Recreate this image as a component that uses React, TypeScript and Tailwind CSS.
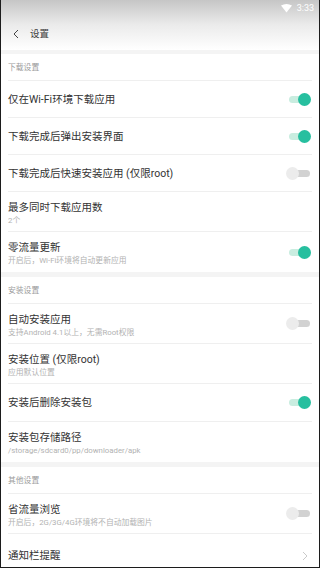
import React from "react";

type Row = {
  title: string;
  sub?: string;
  toggle?: "on" | "off";
  chevron?: boolean;
  last?: boolean;
};

function Toggle({ on }: { on: boolean }) {
  return (
    <div className="relative w-[26px] h-[13px] shrink-0">
      <div
        className={
          on
            ? "absolute left-[3px] top-[3px] w-[19px] h-[7px] rounded-full bg-[#c9ede0]"
            : "absolute left-[5px] top-[3px] w-[19px] h-[7px] rounded-full bg-[#d2d2d2]"
        }
      />
      {on ? (
        <div className="absolute left-[12px] top-0 w-[13px] h-[13px] rounded-full bg-[#27bf9f]" />
      ) : (
        <div className="absolute left-0 top-0 w-[13px] h-[13px] rounded-full bg-[#ececec]" />
      )}
    </div>
  );
}

function SettingRow({ row, h }: { row: Row; h: string }) {
  return (
    <div
      className={
        "mx-[7px] shrink-0 flex items-center justify-between " +
        h +
        (row.last ? "" : " border-b border-[#efefef]")
      }
    >
      <div className={"flex flex-col gap-[2px] " + (row.sub ? "pt-[4px]" : "pt-[1px]")}>
        <div className="text-[10.5px] leading-[12px] text-[#333333]">{row.title}</div>
        {row.sub && (
          <div className="text-[7.8px] leading-[10px] text-[#b2b2b2]">{row.sub}</div>
        )}
      </div>
      {row.toggle && <Toggle on={row.toggle === "on"} />}
      {row.chevron && (
        <svg width="8" height="10" viewBox="0 0 8 10" className="mr-[3px]">
          <path d="M2 1 L6 5 L2 9" fill="none" stroke="#c4c4c4" strokeWidth="0.9" />
        </svg>
      )}
    </div>
  );
}

function SectionLabel({ text, h }: { text: string; h: string }) {
  return (
    <div className={"mx-[7px] shrink-0 flex items-center pt-[2px] border-b border-[#efefef] " + h}>
      <span className="text-[7.8px] leading-[10px] text-[#9a9a9a]">{text}</span>
    </div>
  );
}

function Band({ h }: { h: string }) {
  return <div className={"shrink-0 bg-[#f4f4f4] " + h} />;
}

export default function App() {
  return (
    <div className="w-[320px] h-[568px] overflow-hidden bg-white border-l border-r border-b border-[#1c1c1c] font-['Roboto','Noto_Sans_CJK_SC',sans-serif] flex flex-col">
      {/* header with status bar */}
      <div className="h-[50px] shrink-0 bg-gradient-to-b from-[#c6c6c6] via-[#ebebeb] to-white flex flex-col">
        <div className="h-[16px] flex items-center justify-end pr-[5px] gap-[5px]">
          <svg width="11" height="9" viewBox="0 0 11 9">
            <path d="M0 1.6 Q5.5 -1.4 11 1.6 L5.5 8.6 Z" fill="#ffffff" />
          </svg>
          <span className="text-[9px] leading-[10px] text-white">3:33</span>
        </div>
        <div className="flex-1 flex items-center pl-[11px] pt-[2px]">
          <svg width="8" height="10" viewBox="0 0 8 10">
            <path d="M6 1 L2 5 L6 9" fill="none" stroke="#444444" strokeWidth="1" />
          </svg>
          <span className="ml-[10px] text-[9.5px] leading-[12px] text-[#3c3c3c]">设置</span>
        </div>
      </div>
      <Band h="h-[4px]" />
      <SectionLabel text="下载设置" h="h-[27px]" />
      <SettingRow h="h-[37px]" row={{ title: "仅在Wi-Fi环境下载应用", toggle: "on" }} />
      <SettingRow h="h-[37px]" row={{ title: "下载完成后弹出安装界面", toggle: "on" }} />
      <SettingRow h="h-[37px]" row={{ title: "下载完成后快速安装应用 (仅限root)", toggle: "off" }} />
      <SettingRow h="h-[40px]" row={{ title: "最多同时下载应用数", sub: "2个" }} />
      <SettingRow
        h="h-[40px]"
        row={{ title: "零流量更新", sub: "开启后，Wi-Fi环境将自动更新应用", toggle: "on", last: true }}
      />
      <Band h="h-[5px]" />
      <SectionLabel text="安装设置" h="h-[27px]" />
      <SettingRow
        h="h-[40px]"
        row={{ title: "自动安装应用", sub: "支持Android 4.1以上，无需Root权限", toggle: "off" }}
      />
      <SettingRow h="h-[40px]" row={{ title: "安装位置 (仅限root)", sub: "应用默认位置" }} />
      <SettingRow h="h-[38px]" row={{ title: "安装后删除安装包", toggle: "on" }} />
      <SettingRow
        h="h-[40px]"
        row={{ title: "安装包存储路径", sub: "/storage/sdcard0/pp/downloader/apk", last: true }}
      />
      <Band h="h-[5px]" />
      <SectionLabel text="其他设置" h="h-[27px]" />
      <SettingRow
        h="h-[40px]"
        row={{ title: "省流量浏览", sub: "开启后，2G/3G/4G环境将不自动加载图片", toggle: "off" }}
      />
      <SettingRow h="h-[43px]" row={{ title: "通知栏提醒", chevron: true, last: true }} />
    </div>
  );
}
